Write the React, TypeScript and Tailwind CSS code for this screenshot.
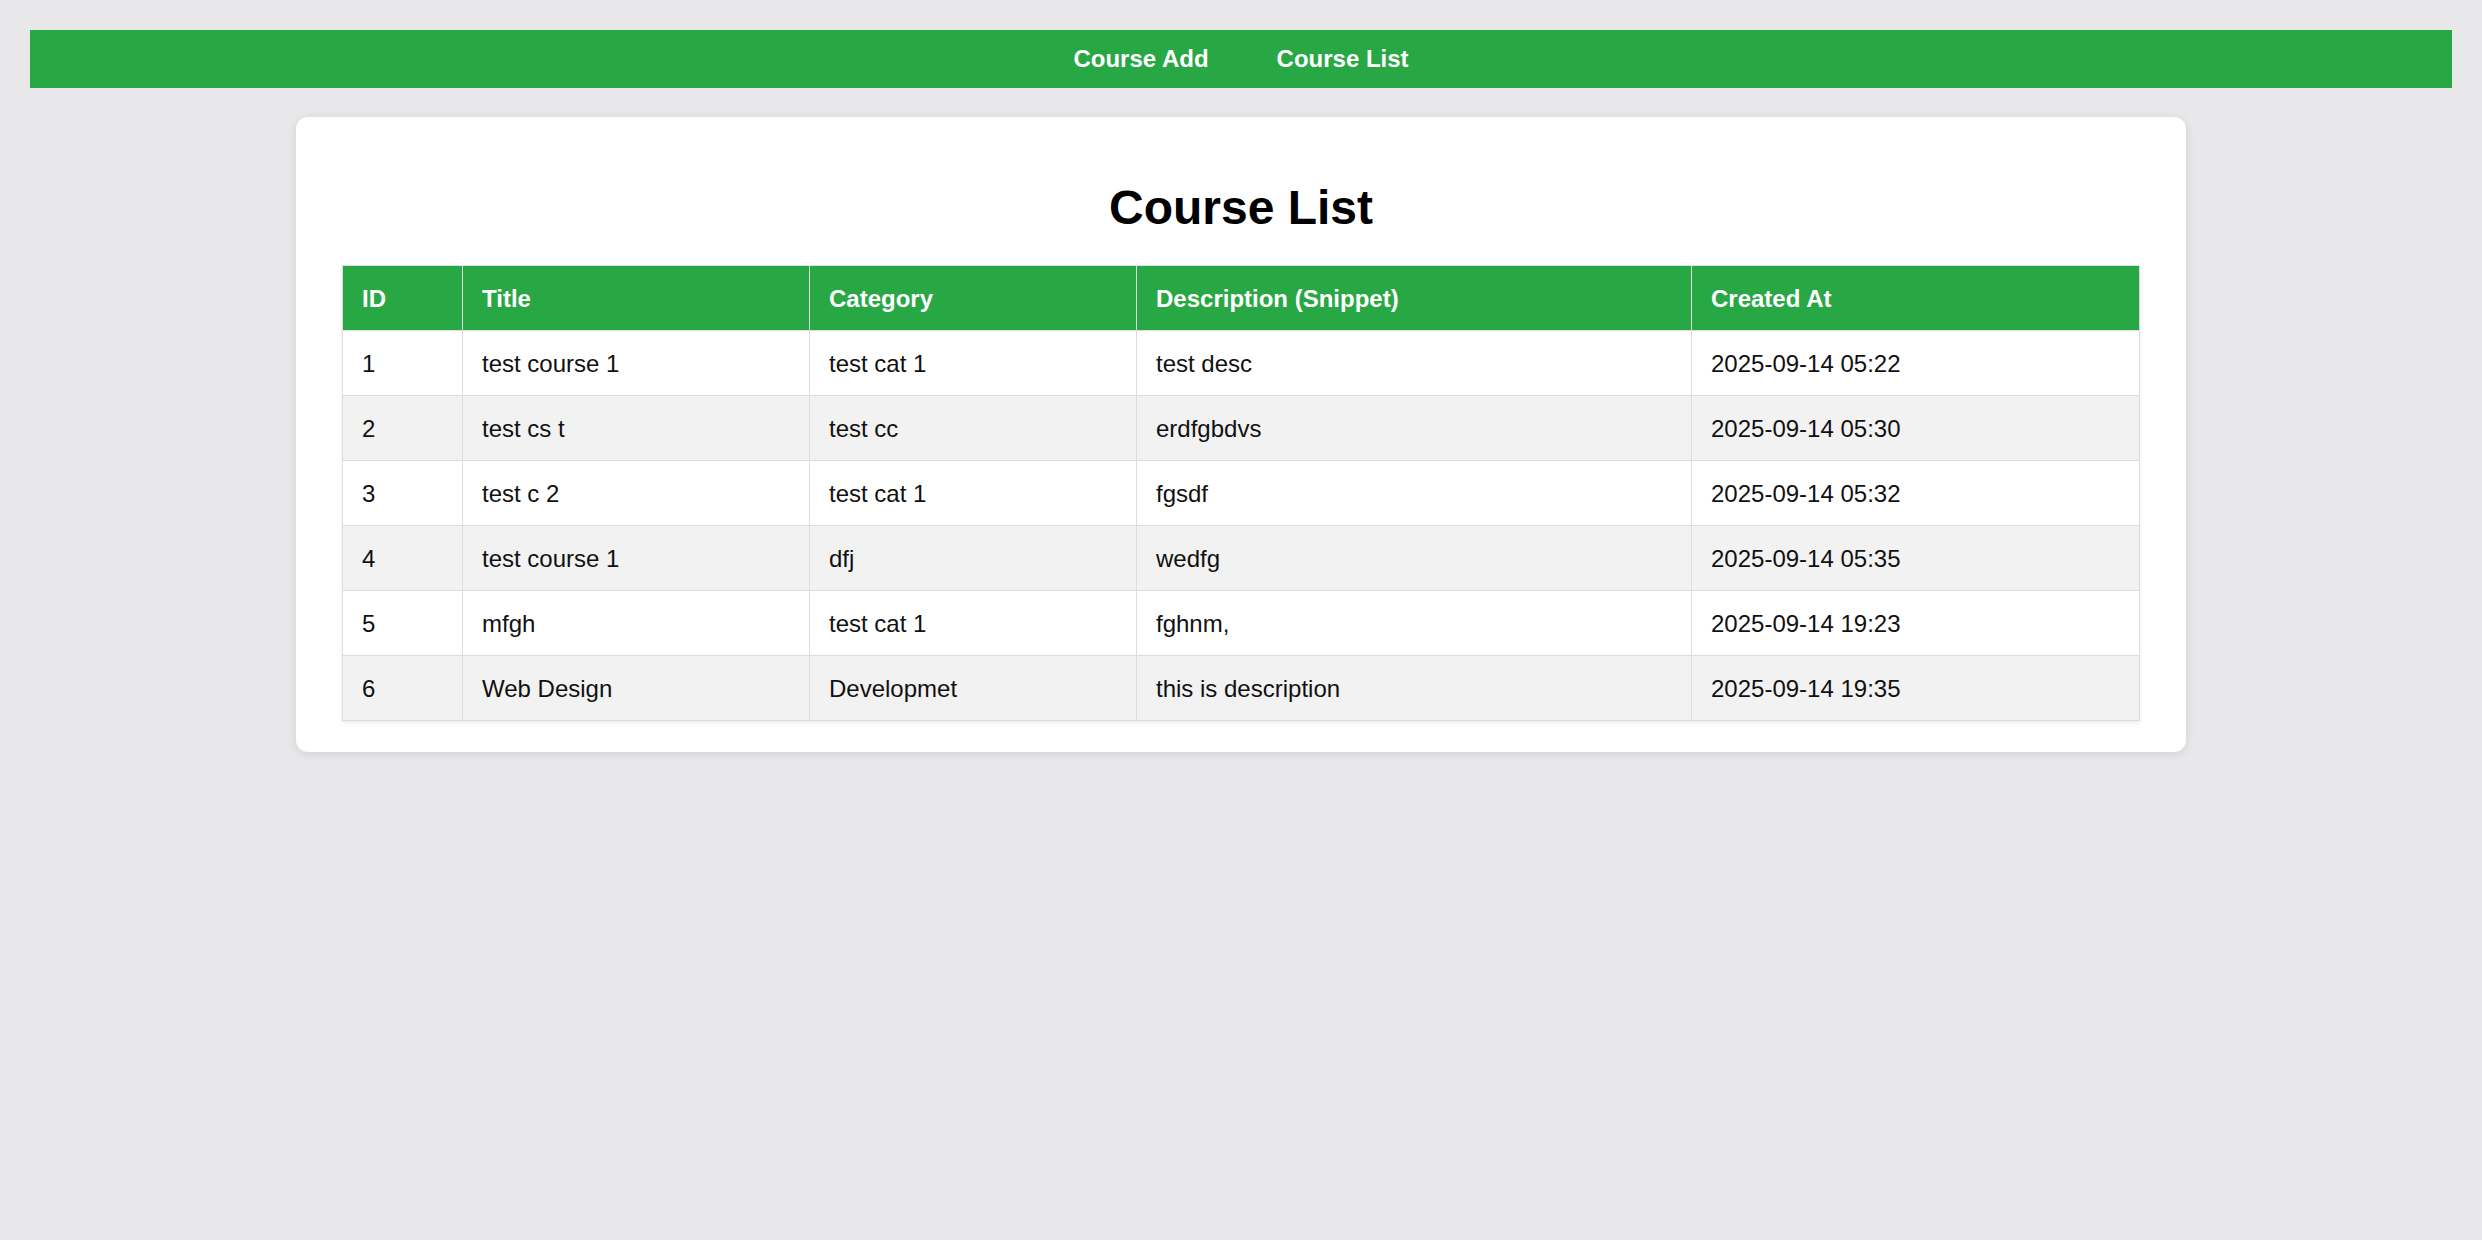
const courses = [
	{ id: 1, title: "test course 1", category: "test cat 1", desc: "test desc", created: "2025-09-14 05:22" },
	{ id: 2, title: "test cs t", category: "test cc", desc: "erdfgbdvs", created: "2025-09-14 05:30" },
	{ id: 3, title: "test c 2", category: "test cat 1", desc: "fgsdf", created: "2025-09-14 05:32" },
	{ id: 4, title: "test course 1", category: "dfj", desc: "wedfg", created: "2025-09-14 05:35" },
	{ id: 5, title: "mfgh", category: "test cat 1", desc: "fghnm,", created: "2025-09-14 19:23" },
	{ id: 6, title: "Web Design", category: "Developmet", desc: "this is description", created: "2025-09-14 19:35" },
];

const cell = "border border-[#dddddd] px-[19px] pt-[19px] pb-[17px] leading-[28px] text-left";

export default function App() {
	return (
		<div className="min-h-screen bg-[#e8e8ea] p-[30px] font-['Liberation_Sans',Arial,sans-serif] text-[#111]">
			<nav className="flex h-[58px] items-center justify-center gap-[68px] bg-[#28a745] text-[24px] font-bold text-white">
				<a href="#">Course Add</a>
				<a href="#">Course List</a>
			</nav>

			<div className="mx-auto mt-[29px] max-w-[1890px] rounded-[12px] bg-white px-[46px] pt-[63px] pb-[31px] shadow-[0_2px_10px_rgba(0,0,0,0.1)]">
				<h2 className="mb-[29px] text-center text-[48px] font-bold leading-[56px] text-black">
					Course List
				</h2>
				<table className="w-full table-fixed border-collapse text-[24px] shadow-[0_2px_4px_rgba(0,0,0,0.08)]">
					<colgroup>
						<col className="w-[120px]" />
						<col className="w-[347px]" />
						<col className="w-[327px]" />
						<col className="w-[555px]" />
						<col />
					</colgroup>
					<thead>
						<tr className="bg-[#28a745] text-white">
							<th className={`${cell} font-bold`}>ID</th>
							<th className={`${cell} font-bold`}>Title</th>
							<th className={`${cell} font-bold`}>Category</th>
							<th className={`${cell} font-bold`}>Description (Snippet)</th>
							<th className={`${cell} font-bold`}>Created At</th>
						</tr>
					</thead>
					<tbody>
						{courses.map((c) => (
							<tr key={c.id} className="bg-white even:bg-[#f2f2f2]">
								<td className={cell}>{c.id}</td>
								<td className={cell}>{c.title}</td>
								<td className={cell}>{c.category}</td>
								<td className={cell}>{c.desc}</td>
								<td className={cell}>{c.created}</td>
							</tr>
						))}
					</tbody>
				</table>
			</div>
		</div>
	);
}
